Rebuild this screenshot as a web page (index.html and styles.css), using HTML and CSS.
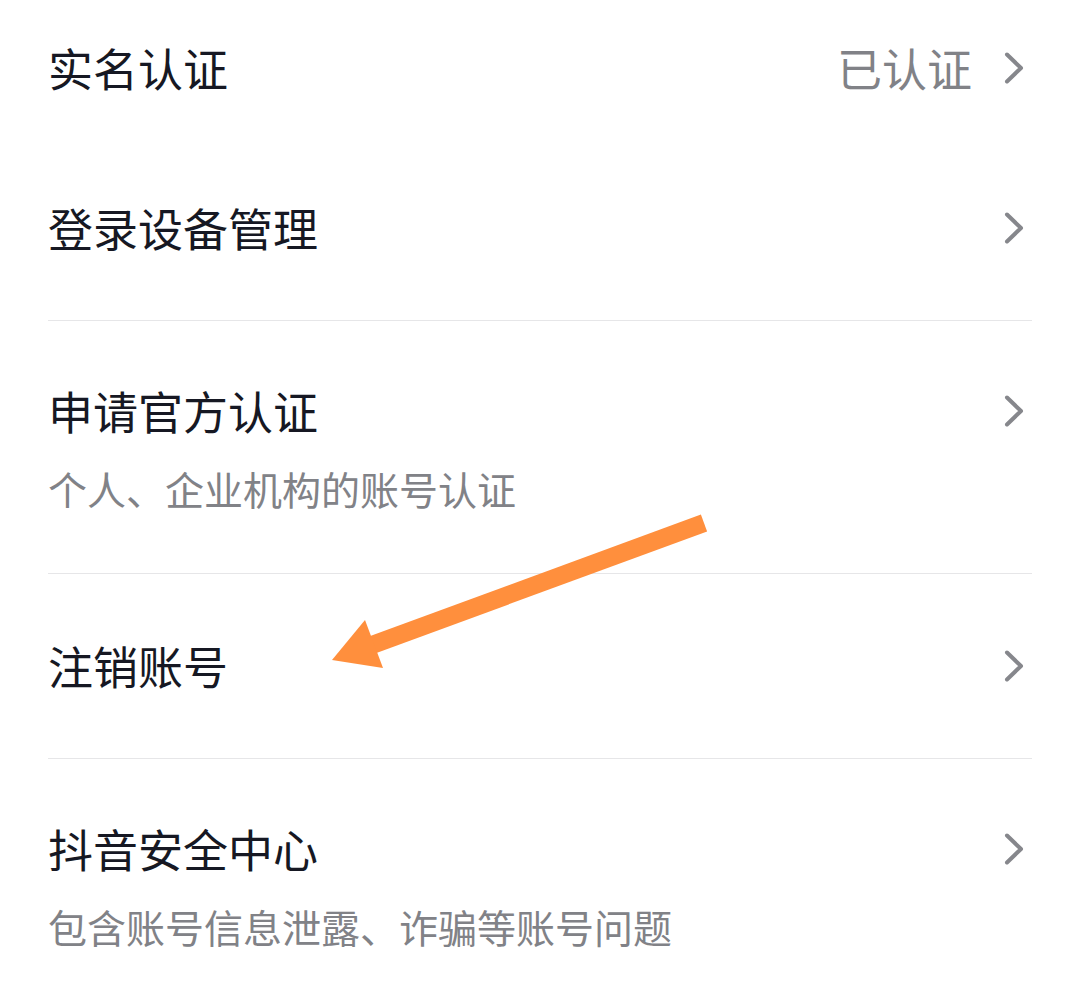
FILE: index.html
```html
<!DOCTYPE html>
<html lang="zh-CN">
<head>
<meta charset="utf-8">
<title>账号与安全</title>
<link rel="stylesheet" href="styles.css">
</head>
<body>
<div class="page">
  <ul class="list">
    <li class="row row-first">
      <span class="title">实名认证</span>
      <span class="value">已认证</span>
      <svg class="chev" viewBox="0 0 24 32" width="24" height="32"><path d="M5 2.5 L19 16 L5 29.5"/></svg>
    </li>
    <li class="row">
      <span class="title">登录设备管理</span>
      <svg class="chev" viewBox="0 0 24 32" width="24" height="32"><path d="M5 2.5 L19 16 L5 29.5"/></svg>
    </li>
    <li class="row row-sub divided">
      <div class="texts">
        <span class="title">申请官方认证</span>
        <span class="sub">个人、企业机构的账号认证</span>
      </div>
      <svg class="chev chev-top" viewBox="0 0 24 32" width="24" height="32"><path d="M5 2.5 L19 16 L5 29.5"/></svg>
    </li>
    <li class="row divided">
      <span class="title">注销账号</span>
      <svg class="chev" viewBox="0 0 24 32" width="24" height="32"><path d="M5 2.5 L19 16 L5 29.5"/></svg>
    </li>
    <li class="row row-sub divided">
      <div class="texts">
        <span class="title">抖音安全中心</span>
        <span class="sub">包含账号信息泄露、诈骗等账号问题</span>
      </div>
      <svg class="chev chev-top" viewBox="0 0 24 32" width="24" height="32"><path d="M5 2.5 L19 16 L5 29.5"/></svg>
    </li>
  </ul>
  <svg class="annot" viewBox="0 0 1080 1000" width="1080" height="1000">
    <line x1="704" y1="523" x2="372" y2="645" class="shaft"/>
    <polygon points="332,660 365,620 383,668" class="head"/>
  </svg>
</div>
</body>
</html>
```

FILE: styles.css
```css
html, body {
  margin: 0;
  padding: 0;
  background: #ffffff;
}

body {
  font-family: "Noto Sans CJK SC", "Noto Sans", sans-serif;
  color: #161823;
  width: 1080px;
  height: 1000px;
  overflow: hidden;
}

.page {
  position: relative;
  width: 1080px;
  height: 1000px;
}

.list {
  list-style: none;
  margin: 0;
  padding: 0 48px;
}

.row {
  display: flex;
  align-items: center;
  height: 185px;
  box-sizing: border-box;
}

.row-first {
  height: 135px;
}

.divided {
  border-top: 1px solid #e6e6e8;
}

.row-sub {
  height: auto;
  align-items: flex-start;
  padding: 60px 0;
}

.texts {
  flex: 1;
  display: flex;
  flex-direction: column;
  gap: 22px;
}

.title {
  flex: 1;
  font-size: 45px;
  line-height: 60px;
  color: #161823;
  white-space: nowrap;
}

.texts .title {
  flex: none;
}

.sub {
  font-size: 39px;
  line-height: 50px;
  color: #818287;
  white-space: nowrap;
}

.value {
  font-size: 45px;
  line-height: 60px;
  color: #818287;
  margin-right: 30px;
}

.chev {
  flex: none;
  margin-right: 6px;
}

.chev-top {
  margin-top: 14px;
}

.chev path {
  fill: none;
  stroke: #86878c;
  stroke-width: 4;
  stroke-linecap: round;
  stroke-linejoin: round;
}

.annot {
  position: absolute;
  left: 0;
  top: 0;
  pointer-events: none;
}

.shaft {
  stroke: #ff8f3d;
  stroke-width: 18;
  stroke-linecap: butt;
}

.head {
  fill: #ff8f3d;
}
```
